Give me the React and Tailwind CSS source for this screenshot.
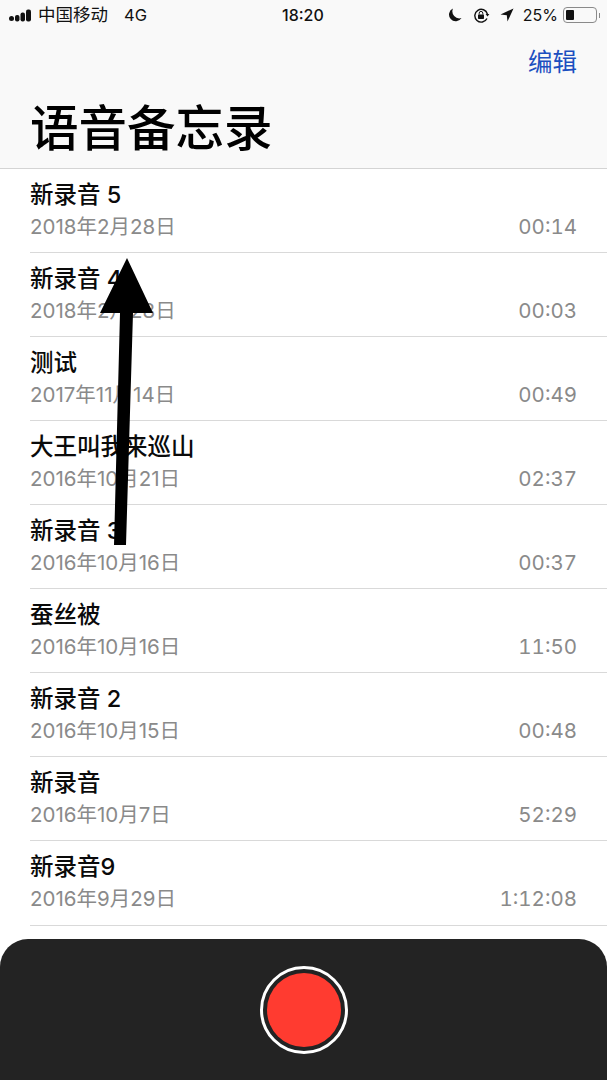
const memos = [
  { title: "新录音 5", date: "2018年2月28日", time: "00:14" },
  { title: "新录音 4", date: "2018年2月28日", time: "00:03" },
  { title: "测试", date: "2017年11月14日", time: "00:49" },
  { title: "大王叫我来巡山", date: "2016年10月21日", time: "02:37" },
  { title: "新录音 3", date: "2016年10月16日", time: "00:37" },
  { title: "蚕丝被", date: "2016年10月16日", time: "11:50" },
  { title: "新录音 2", date: "2016年10月15日", time: "00:48" },
  { title: "新录音", date: "2016年10月7日", time: "52:29" },
  { title: "新录音9", date: "2016年9月29日", time: "1:12:08" },
];

function StatusBar() {
  return (
    <div className="relative flex h-[30px] items-center justify-between pl-[9px] pr-[7px] text-[15px] leading-none text-[#111]">
      <div className="flex items-center">
        <svg width="25" height="13" viewBox="0 0 25 13" fill="#111">
          <circle cx="2.5" cy="9.5" r="2.5" />
          <rect x="6" y="6" width="4.5" height="6.5" rx="2" />
          <rect x="11.5" y="3.5" width="4.5" height="9" rx="2" />
          <rect x="17" y="0.5" width="5" height="12" rx="2" />
        </svg>
        <span className="ml-[4px] w-[70px] text-[17.5px]">中国移动</span>
        <span className="ml-[16px] text-[16.5px]">4G</span>
      </div>
      <span className="absolute left-[282px] top-[7px] text-[16px] font-medium">18:20</span>
      <div className="flex items-center">
        {/* moon */}
        <svg width="14" height="14" viewBox="0 0 14 14" fill="#111">
          <path d="M5 .5 A6.7 6.7 0 1 0 13.5 10 A7 7 0 0 1 5 .5Z" />
        </svg>
        {/* rotation lock */}
        <svg className="ml-[11px]" width="17" height="15" viewBox="0 0 17 15" fill="none" stroke="#111">
          <path d="M14 10.5 A6.4 6.4 0 1 1 14.4 6" strokeWidth="1.4" />
          <path d="M12.6 6 L16.4 6 L14.5 8.5Z" fill="#111" stroke="none" />
          <rect x="5" y="6.5" width="6" height="4.5" rx="0.7" fill="#111" stroke="none" />
          <path d="M6.2 6.5 V5.2 A1.8 1.8 0 0 1 9.8 5.2 V6.5" strokeWidth="1" />
        </svg>
        {/* location */}
        <svg className="ml-[10px]" width="14" height="14" viewBox="0 0 14 14" fill="#111">
          <path d="M13.5 .5 L0.5 6.5 L6.8 7.2 L7.5 13.5Z" />
        </svg>
        <span className="ml-[9px] text-[16px]">25%</span>
        {/* battery */}
        <div className="ml-[5px] flex items-center">
          <div className="flex h-[16px] w-[34px] items-center rounded-[4px] border border-[#8a8a8a] p-[2px]">
            <div className="h-full w-[8px] rounded-[1px] bg-[#111]" />
          </div>
          <div className="ml-[2px] h-[5px] w-[1px] bg-[#8a8a8a]" />
        </div>
      </div>
    </div>
  );
}

function MemoRow({ memo }) {
  return (
    <div className="ml-[30px] flex h-[84px] flex-col border-b border-[#d9d9d9] pr-[30px] last:h-[85px]">
      <div className="mt-[12px] text-[23.5px] font-medium leading-[28px] text-[#0a0a0a]">{memo.title}</div>
      <div className="mt-[5px] flex justify-between text-[20.5px] leading-[26px] text-[#8a8a8a]">
        <span>{memo.date}</span>
        <span className="tabular-nums">{memo.time}</span>
      </div>
    </div>
  );
}

export default function App() {
  return (
    <div
      className="relative h-[1080px] w-[607px] overflow-hidden bg-white"
      style={{ fontFamily: '"Inter", "Noto Sans CJK SC", sans-serif' }}
    >
      <header className="h-[169px] border-b border-[#d4d4d4] bg-[#f9f9f9]">
        <StatusBar />
        <div className="flex justify-end pr-[30px] pt-[16px] text-[24.5px] leading-[32px] text-[#1c4fc0]">编辑</div>
        <h1 className="pl-[30px] pt-[22px] text-[48.5px] font-medium leading-[58px] text-black">语音备忘录</h1>
      </header>

      <div>
        {memos.map((memo) => (
          <MemoRow key={memo.title + memo.time} memo={memo} />
        ))}
      </div>

      {/* annotation arrow drawn over the list */}
      <svg className="absolute left-0 top-0" width="607" height="600" viewBox="0 0 607 600" fill="#000">
        <path d="M127 258 L153 313 L133 313 L126 545 L114 545 L120 313 L100 313Z" />
      </svg>

      <div className="absolute bottom-0 left-0 flex h-[141px] w-full items-center justify-center rounded-t-[28px] bg-[#232323]">
        <div className="flex h-[88px] w-[88px] items-center justify-center rounded-full border-[3px] border-white">
          <div className="h-[74px] w-[74px] rounded-full bg-[#ff3b30]" />
        </div>
      </div>
    </div>
  );
}
